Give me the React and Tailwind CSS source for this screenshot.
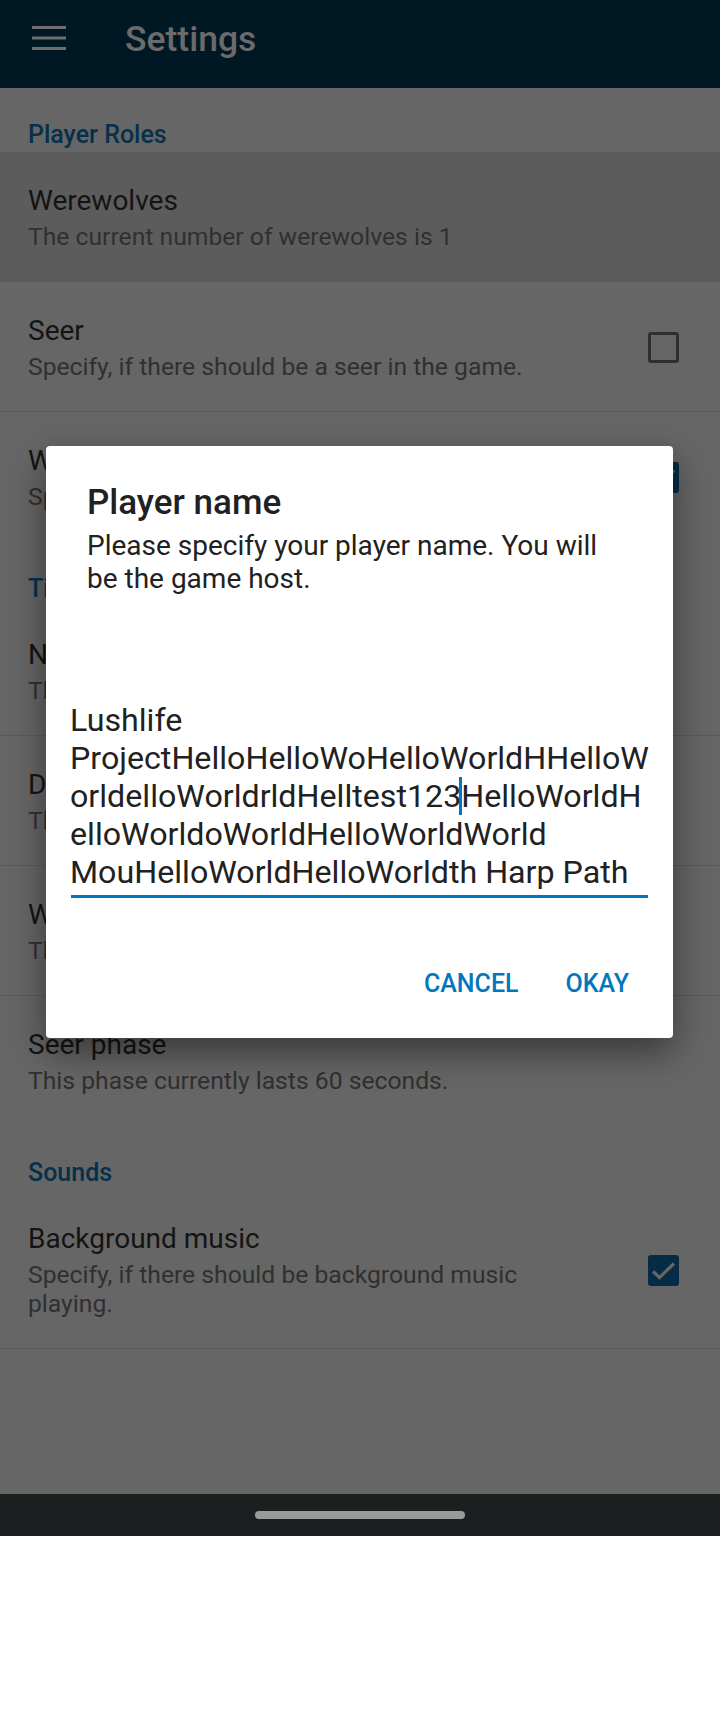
import React from 'react';

const Category = ({ title }) => (
    <div className="h-[64px] shrink-0 pt-[32px] pl-[28px] text-[25px] leading-[29px] font-medium text-[#07304b]">
        {title}
    </div>
);

const Checkbox = ({ checked }) => checked ? (
    <div className="w-[31px] h-[31px] rounded-[3px] bg-[#052c45]">
        <svg width="31" height="31" viewBox="0 0 31 31">
            <path d="M5 16.5L11.5 22.5L26 8.5" fill="none" stroke="#666666" strokeWidth="3.2" />
        </svg>
    </div>
) : (
    <div className="w-[31px] h-[31px] rounded-[3px] border-[3px] border-[#2f2f2f]" />
);

const Pref = ({ title, summary, checkbox, checked = false, divider = true, pressed = false }) => (
    <div
        className={`shrink-0 flex items-center pl-[28px] pr-[41px] pt-[32px] ${divider ? 'pb-[30px] border-b border-[#5a5a5a]' : 'pb-[31px]'} ${pressed ? 'bg-[#5c5c5c]' : ''}`}
    >
        <div className="flex-1 pr-[48px]">
            <div className="text-[28px] leading-[33px] text-[#141414]">{title}</div>
            <div className="mt-[5px] text-[24.7px] leading-[29px] text-[#303030]">{summary}</div>
        </div>
        {checkbox && <Checkbox checked={checked} />}
    </div>
);

const App = () => {
    return (
        <div className="relative w-[720px] h-[1712px] bg-white overflow-hidden font-['Roboto',sans-serif]">
            <div className="h-[1494px] bg-[#666666] flex flex-col">
                <header className="h-[88px] shrink-0 bg-[#001724] flex items-center pl-[32px] pb-[9px]">
                    <svg width="34" height="24" viewBox="0 0 34 24" className="mb-[4px]">
                        <rect x="0" y="0" width="34" height="3" fill="#6e6e6e" />
                        <rect x="0" y="10.5" width="34" height="3" fill="#6e6e6e" />
                        <rect x="0" y="21" width="34" height="3" fill="#6e6e6e" />
                    </svg>
                    <span className="ml-[59px] text-[35.5px] font-medium text-[#6b6b6b]">Settings</span>
                </header>

                <Category title="Player Roles" />
                <Pref pressed title="Werewolves" summary="The current number of werewolves is 1" />
                <Pref checkbox title="Seer" summary="Specify, if there should be a seer in the game." />
                <Pref checkbox checked divider={false} title="Witch" summary="Specify, if there should be a witch in the game." />

                <Category title="Timers" />
                <Pref title="Night phase" summary="This phase currently lasts 60 seconds." />
                <Pref title="Day phase" summary="This phase currently lasts 60 seconds." />
                <Pref title="Werewolf phase" summary="This phase currently lasts 60 seconds." />
                <Pref divider={false} title="Seer phase" summary="This phase currently lasts 60 seconds." />

                <Category title="Sounds" />
                <Pref checkbox checked title="Background music" summary="Specify, if there should be background music playing." />
            </div>

            <div className="h-[42px] bg-[#1c1f20] flex items-center justify-center">
                <div className="w-[210px] h-[8px] rounded-full bg-[#999b9a]" />
            </div>

            {/* dialog over the dimmed list */}
            <div className="absolute left-[46px] top-[446px] w-[627px] bg-white rounded-[4px] shadow-[0_14px_36px_rgba(0,0,0,0.45)] pt-[36px] pb-[40px]">
                <div className="px-[41px]">
                    <h2 className="text-[35px] leading-[42px] font-medium text-[#212121]">Player name</h2>
                    <p className="mt-[5px] max-w-[525px] text-[28px] leading-[33px] text-[#212121]">
                        Please specify your player name. You will be the game host.
                    </p>
                </div>
                <div className="mt-[106px] ml-[24px] text-[32.2px] leading-[38px] text-[#212121] whitespace-nowrap">
                    <div>Lushlife</div>
                    <div>ProjectHelloHelloWoHelloWorldHHelloW</div>
                    <div>
                        orldelloWorldrldHelltest123
                        <span className="relative">
                            <span className="absolute left-[-2px] top-0 w-[3px] h-[38px] bg-[#0277bd]" />
                            HelloWorldH
                        </span>
                    </div>
                    <div>elloWorldoWorldHelloWorldWorld</div>
                    <div>MouHelloWorldHelloWorldth Harp Path</div>
                </div>
                <div className="mt-[4px] ml-[25px] w-[577px] h-[3px] bg-[#0277bd]" />
                <div className="mt-[71px] flex justify-end gap-[47px] pr-[44px] text-[25px] leading-[29px] font-medium text-[#0277bd]">
                    <span>CANCEL</span>
                    <span>OKAY</span>
                </div>
            </div>
        </div>
    );
};

export default App;
